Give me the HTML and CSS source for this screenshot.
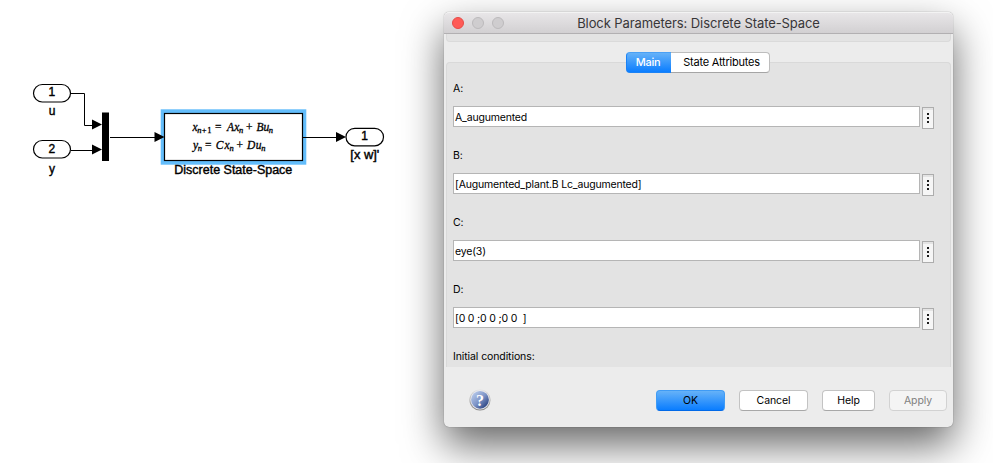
FILE: index.html
```html
<!DOCTYPE html>
<html lang="en">
<head>
<meta charset="utf-8">
<title>Block Parameters: Discrete State-Space</title>
<link rel="stylesheet" href="styles.css">
</head>
<body>
<main class="workspace">
  <svg class="diagram" width="444" height="463" viewBox="0 0 444 463">
    <g class="port">
      <rect x="33.5" y="84.5" width="37" height="17.5" rx="8.75"/>
      <rect x="33.5" y="140.5" width="37" height="17.5" rx="8.75"/>
      <rect x="346" y="128.3" width="37.5" height="17.5" rx="8.75"/>
    </g>
    <rect class="halo" x="160.7" y="109.3" width="145.6" height="55.4"/>
    <rect class="block" x="164.5" y="113.5" width="138" height="47"/>
    <g class="wire">
      <path d="M71 93.5H84.5V125.5H93"/>
      <path d="M71 150.5H93"/>
      <path d="M110 137.5H155"/>
      <path d="M303 137.5H337"/>
    </g>
    <g class="arrow">
      <path d="M92 119.5L102 124.5L92 129.5Z"/>
      <path d="M92 144.5L102 149.5L92 154.5Z"/>
      <path d="M154.5 132L164.5 137L154.5 142Z"/>
      <path d="M336 132L346 137L336 142Z"/>
    </g>
    <rect x="102" y="112.5" width="7" height="48.5"/>
    <g class="label">
      <text x="51.8" y="96.3">1</text>
      <text x="52" y="115.3">u</text>
      <text x="51.8" y="153.3">2</text>
      <text x="52" y="172.5">y</text>
      <text x="233.3" y="174" textLength="118" lengthAdjust="spacingAndGlyphs">Discrete State-Space</text>
      <text x="364.6" y="140.3">1</text>
      <text x="364.8" y="159" textLength="29" lengthAdjust="spacingAndGlyphs">[x w]'</text>
    </g>
    <g class="math">
      <text y="131"><tspan class="v" x="192.5">x</tspan><tspan class="sub v" x="197.3" dy="1.5">n</tspan><tspan class="sub" x="201.8">+</tspan><tspan class="sub" x="207.2">1</tspan><tspan x="215" dy="-1.5">=</tspan><tspan class="v" x="227">A</tspan><tspan class="v" x="234.2">x</tspan><tspan class="sub v" x="239" dy="1.5">n</tspan><tspan x="246" dy="-1.5">+</tspan><tspan class="v" x="256.5">B</tspan><tspan class="v" x="263.6">u</tspan><tspan class="sub v" x="268.8" dy="1.5">n</tspan></text>
      <text y="149"><tspan class="v" x="193">y</tspan><tspan class="sub v" x="197.8" dy="1.5">n</tspan><tspan x="205" dy="-1.5">=</tspan><tspan class="v" x="215.8">C</tspan><tspan class="v" x="224.6">x</tspan><tspan class="sub v" x="229.4" dy="1.5">n</tspan><tspan x="236.6" dy="-1.5">+</tspan><tspan class="v" x="247">D</tspan><tspan class="v" x="255.8">u</tspan><tspan class="sub v" x="261.2" dy="1.5">n</tspan></text>
    </g>
  </svg>

  <section class="dialog">
    <header class="titlebar">
      <div class="lights"><i class="light close"></i><i class="light"></i><i class="light"></i></div>
      <h1>Block Parameters: Discrete State-Space</h1>
    </header>
    <div class="group-end"></div>
    <div class="tabs">
      <button class="tab active">Main</button><button class="tab">State Attributes</button>
    </div>
    <div class="panel">
      <div class="field">
        <label for="a">A:</label>
        <div class="row"><input id="a" value="A_augumented"><button class="more"><i></i><i></i><i></i></button></div>
      </div>
      <div class="field">
        <label for="b">B:</label>
        <div class="row"><input id="b" value="[Augumented_plant.B Lc_augumented]"><button class="more"><i></i><i></i><i></i></button></div>
      </div>
      <div class="field">
        <label for="c">C:</label>
        <div class="row"><input id="c" value="eye(3)"><button class="more"><i></i><i></i><i></i></button></div>
      </div>
      <div class="field">
        <label for="d">D:</label>
        <div class="row"><input id="d" value="[0 0 ;0 0 ;0 0  ]"><button class="more"><i></i><i></i><i></i></button></div>
      </div>
      <div class="field"><label>Initial conditions:</label></div>
    </div>
    <footer class="actions">
      <svg class="help" width="22" height="22" viewBox="0 0 22 22">
        <defs>
          <linearGradient id="rim" x1="0" y1="0" x2="0" y2="1"><stop offset="0" stop-color="#e2e2e2"/><stop offset="1" stop-color="#858585"/></linearGradient>
          <linearGradient id="ball" x1="0" y1="0" x2="1" y2="1"><stop offset=".15" stop-color="#b1c3e6"/><stop offset=".5" stop-color="#7f96c8"/><stop offset=".9" stop-color="#273e7d"/></linearGradient>
        </defs>
        <circle cx="11" cy="11" r="10.6" fill="url(#rim)"/>
        <circle cx="11" cy="10.8" r="9.7" fill="#e9e9ee"/>
        <circle cx="11" cy="10.8" r="8.9" fill="url(#ball)"/>
        <text class="help-mark" x="11" y="16.6">?</text>
      </svg>
      <button class="btn ok">OK</button>
      <button class="btn cancel">Cancel</button>
      <button class="btn help-btn">Help</button>
      <button class="btn apply" disabled>Apply</button>
    </footer>
  </section>
</main>
</body>
</html>
```
FILE: styles.css
```css
* { box-sizing: border-box; }
body { margin: 0; background: #fff; font-family: Inter, "Liberation Sans", sans-serif; overflow: hidden; }
button, input { font: inherit; margin: 0; padding: 0; }
.workspace { display: flex; align-items: flex-start; width: 993px; height: 463px; overflow: hidden; }

.diagram { flex: none; display: block; }
.port rect, .block { fill: #fff; stroke: #000; stroke-width: 1.2; }
.halo { fill: #63bdfb; }
.wire { fill: none; stroke: #000; stroke-width: 1; }
.label { font: 12px "Liberation Sans", Arial, sans-serif; text-anchor: middle; stroke: #000; stroke-width: .4; }
.math { font: 11.5px "Liberation Serif", serif; stroke: #000; stroke-width: .3; }
.v { font-style: italic; }
.sub { font-size: 8.5px; }

.dialog {
  flex: none; width: 509px; height: 415px; margin-top: 12px;
  display: flex; flex-direction: column;
  background: #ececec; border-radius: 5px;
  box-shadow: 0 0 1px rgba(0,0,0,.55), 0 18px 40px rgba(0,0,0,.6);
}
.titlebar {
  flex: none; height: 22px; display: grid; align-items: center;
  background: linear-gradient(#e8e6e8, #d2d0d2);
  border-top: 1px solid #f3f3f3; border-bottom: 1px solid #b2b0b2; border-radius: 5px 5px 0 0;
}
.titlebar > * { grid-area: 1 / 1; }
.lights { display: flex; gap: 8px; padding-left: 8px; }
.light { width: 12px; height: 12px; border-radius: 50%; background: #cfcdcf; border: 1px solid #bcbabc; }
.light.close { background: #ff5b57; border-color: #e64c48; }
h1 { margin: 0; text-align: center; font-size: 13px; font-weight: 400; line-height: 20px; letter-spacing: -.09px; color: #383638; }

.group-end { flex: none; height: 8px; margin: 0 2px; background: #e3e3e3; border: 1px solid #dadada; border-top: 0; border-radius: 0 0 4px 4px; }
.tabs { flex: none; z-index: 1; display: flex; justify-content: center; height: 21px; margin: 10px 0 -11px; padding-right: 1px; }
.tab { width: 99px; height: 21px; padding-left: 3px; border: 1px solid #bdbdbd; border-left: 0; border-bottom-color: #a5a5a5; border-radius: 0 4px 4px 0; background: #fff; font-size: 11px; line-height: 19px; letter-spacing: -.22px; color: #000; }
.tab.active { width: 45px; padding: 0 2px 0 0; letter-spacing: -.3px; border: 1px solid #1a82f5; border-top-color: #4aa0f5; border-right: 0; border-radius: 4px 0 0 4px; background: linear-gradient(#66b2f8, #0a7dff); color: #fff; font-weight: 500; }

.panel { flex: none; height: 305px; margin: 0 2px; padding: 17px 0 0 6px; background: #e3e3e3; border: 1px solid #d9d9d9; border-bottom: 0; border-radius: 4px 4px 0 0; }
.field { height: 67px; font-size: 10.5px; letter-spacing: -.1px; }
.field label { display: block; height: 26px; line-height: 18px; color: #000; }
.row { display: flex; gap: 2px; align-items: flex-start; }
.row input { width: 467px; height: 21px; padding: 1px 1px 0; border: 1px solid #b5b5b5; border-radius: 0; background: #fff; color: #000; outline: 0; letter-spacing: -.18px; }
.more { width: 12px; height: 22px; margin-top: 1px; display: flex; flex-direction: column; align-items: center; gap: 2px; padding-top: 5px; border: 1px solid #adadad; background: linear-gradient(#e4e4e4 2px, #f6f6f6 2px); }
.more i { width: 2px; height: 2px; background: #1c1c1c; }

.actions { display: flex; align-items: flex-start; padding: 23px 6px 0 25px; }
.help { margin: -1px 165px 0 0; }
.help-mark { font: bold 16px "Liberation Serif", serif; text-anchor: middle; fill: #fff; }
.btn { height: 21px; border: 1px solid #c3c3c3; border-bottom-color: #a8a8a8; border-radius: 4px; background: #fff; color: #000; font-size: 10.5px; line-height: 19px; letter-spacing: -.1px; }
.ok { width: 69px; margin-right: 14px; border-color: #3f9bf5; border-bottom-color: #0069e8; background: linear-gradient(#66b2f8, #0a7dff); }
.cancel { width: 69px; margin-right: 14px; }
.help-btn { width: 53px; margin-right: 14px; }
.apply { width: 58px; background: #f4f4f4; border-color: #d2d2d2; color: #808080; }
```
